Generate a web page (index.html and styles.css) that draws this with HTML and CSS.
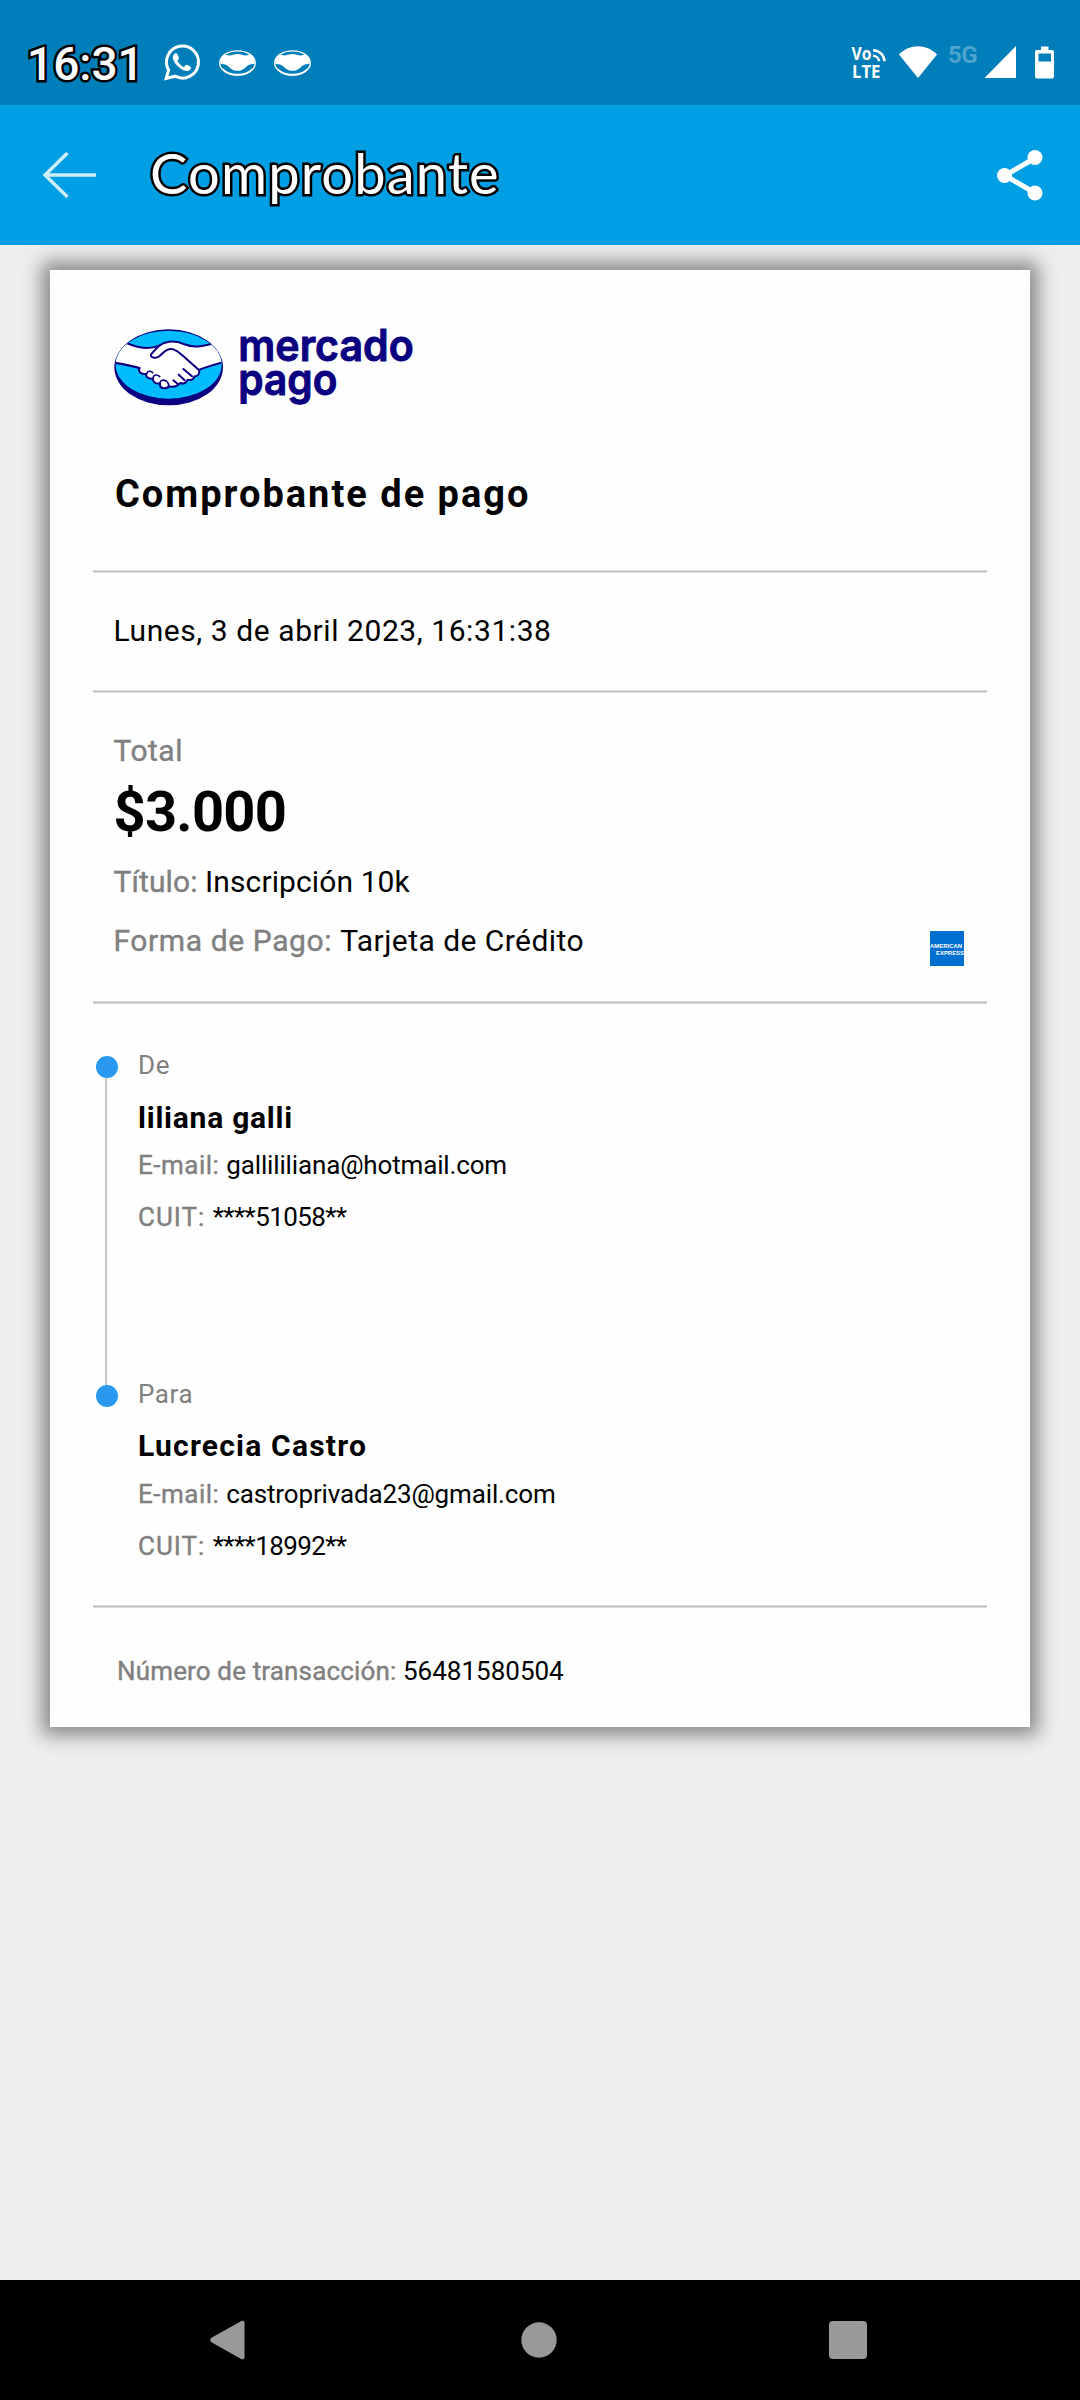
FILE: index.html
```html
<!DOCTYPE html>
<html lang="es">
<head>
<meta charset="utf-8">
<title>Comprobante</title>
<link rel="stylesheet" href="styles.css">
</head>
<body>
<div class="status">
  <span class="clock">16:31</span>
  <svg class="ic-wa" width="36" height="37" viewBox="0 0 36 37"><path d="M2.2 34.4 4.6 26A16 16 0 1 1 11 32.2Z" fill="none" stroke="#fff" stroke-width="3"/><path d="M12.8 9.6c-.6-.5-2.200-.3-2.900.6-2.200 3-.8 6.900 3.200 11.300 4.200 4.500 8.600 6.600 12 4.900 1.500-.8 2.300-2.300 1.900-3.200-.3-.8-3.900-2.700-4.800-2.500-1 .2-1.600 2.200-2.500 2.200-1.200 0-5.900-4.300-6.100-5.900-.1-.9 1.400-1.700 1.400-2.700 0-.9-1.500-4.200-2.200-4.700Z" fill="#fff"/></svg>
  <svg class="ic-mp" width="37" height="26" viewBox="0 0 37 26"><ellipse cx="18.500" cy="13" rx="17.800" ry="12.200" fill="none" stroke="#fff" stroke-width="1.300"/><path d="M1.500 14C.8 10 2 7.500 5 4.600c3 .8 6 1.300 9 .2 3-1.200 6-1.200 9 0s6 .6 9-.2c3 2.900 4.200 5.400 3.500 9.400-3.500-.4-6 .4-8 2.500-2 2.200-4.500 4-7 4.300h-4c-2.500-.3-5-2.100-7-4.300-2-2.100-4.500-2.900-8-2.500Z" fill="#fff"/><path d="M3.500 19c7 7.600 23 7.600 30 0" fill="none" stroke="#fff" stroke-width="1.800"/></svg>
  <svg class="ic-mp" width="37" height="26" viewBox="0 0 37 26"><ellipse cx="18.500" cy="13" rx="17.800" ry="12.200" fill="none" stroke="#fff" stroke-width="1.300"/><path d="M1.500 14C.8 10 2 7.500 5 4.600c3 .8 6 1.300 9 .2 3-1.200 6-1.200 9 0s6 .6 9-.2c3 2.900 4.200 5.400 3.500 9.400-3.500-.4-6 .4-8 2.500-2 2.200-4.500 4-7 4.300h-4c-2.500-.3-5-2.100-7-4.300-2-2.100-4.500-2.900-8-2.500Z" fill="#fff"/><path d="M3.500 19c7 7.600 23 7.600 30 0" fill="none" stroke="#fff" stroke-width="1.800"/></svg>
  <svg class="radios" width="206" height="36" viewBox="850 45 206 36">
    <text class="volte" x="851.500" y="60" textLength="20" lengthAdjust="spacingAndGlyphs">Vo</text>
    <text class="volte" x="852" y="77.500" textLength="28.500" lengthAdjust="spacingAndGlyphs">LTE</text>
    <g fill="none" stroke="#fff" stroke-width="2.400"><path d="M873 50.200a11.500 11.500 0 0 1 11.500 11M873 55.700a6 6 0 0 1 6 5.500"/></g>
    <path d="M918 78 899 54.500c10.500-11 27.500-11 38 0Z" fill="#fff"/>
    <text class="fiveg" x="948" y="63" textLength="29.500">5G</text>
    <path d="M1016 46v32h-31.500Z" fill="#fff"/>
    <path d="M1041 46.500h7.500V50h3.500a2 2 0 0 1 2 2v24.500a2 2 0 0 1-2 2h-15a2 2 0 0 1-2-2V52a2 2 0 0 1 2-2h4Zm-2.500 7V61.500h12.500V53.500Z" fill="#fff" fill-rule="evenodd"/>
  </svg>
</div>
<header class="appbar">
  <svg class="back" width="54" height="48" viewBox="0 0 54 48"><path d="M53 24H3M24.500 2 2 24l22.500 22" fill="none" stroke="#cfeefb" stroke-width="3.400"/></svg>
  <h1 class="title">Comprobante</h1>
  <svg class="share" width="46" height="51" viewBox="0 0 46 51"><path d="M38 8 8 25.500 38 43" fill="none" stroke="#fff" stroke-width="5"/><g fill="#fff"><circle cx="38" cy="7.500" r="7.500"/><circle cx="7.500" cy="25.500" r="7.500"/><circle cx="38" cy="43" r="7.500"/></g></svg>
</header>
<main class="page">
  <article class="card">
    <svg class="logo" width="300" height="78" viewBox="280 266 900 234">
      <clipPath id="oval"><ellipse cx="444" cy="373" rx="159" ry="102"/></clipPath>
      <ellipse cx="444" cy="381" rx="163" ry="114" fill="#0a0080"/>
      <ellipse cx="444" cy="373" rx="159" ry="102" fill="#00bcff"/>
      <g clip-path="url(#oval)" stroke="#0a0080" stroke-width="6" stroke-linejoin="round" stroke-linecap="round">
        <path d="M270 292 325 311c30 12 62 18 92 4 24-15 50-13 72-4 30 12 52 8 82 0l60-22v72c-35 5-60 15-95 27 1 14-5 20-14 20-4 10-12 13-21 10-5 11-13 14-22 10-10 10-20 14-32 10-18 12-31 4-29-9-14 3-22-5-21-14-15 2-22-6-20-14-16 2-26-8-20-18-24-7-52-12-90-18Z" fill="#fff"/>
        <path d="M417 315c-8 8-16 14-26 28-4 8 14 14 26 4 10-8 18-21 34-21 14 0 22 10 34 19l49 43M488 386l26 22M474 403l18 17M458 420l14 12" fill="none"/>
        <path d="M378 400c2-8 12-10 18-3M398 412c0-9 12-11 19-3M418 427c2-9 14-11 22-2 6 7 4 12 2 16" fill="none" stroke-width="5"/>
      </g>
      <text class="brand" x="653" y="362" textLength="526" lengthAdjust="spacingAndGlyphs">mercado</text>
      <text class="brand" x="653" y="465" textLength="297" lengthAdjust="spacingAndGlyphs">pago</text>
    </svg>
    <h2 class="heading">Comprobante de pago</h2>
    <hr class="rule">
    <p class="date">Lunes, 3 de abril 2023, 16:31:38</p>
    <hr class="rule">
    <section class="summary">
      <div>
        <p class="label row-total">Total</p>
        <p class="amount">$3.000</p>
        <p class="row-title"><span class="label">Título:</span> Inscripción 10k</p>
        <p class="row-method"><span class="label">Forma de Pago: </span>Tarjeta de Crédito</p>
      </div>
      <svg class="amex" width="34" height="35" viewBox="0 0 34 35"><rect width="34" height="35" fill="#016fd0"/><text x="0" y="16.800" textLength="32" lengthAdjust="spacingAndGlyphs">AMERICAN</text><text x="6" y="24" textLength="28" lengthAdjust="spacingAndGlyphs">EXPRESS</text></svg>
    </section>
    <hr class="rule">
    <section class="parties">
      <div class="track"><i class="dot"></i><i class="line"></i><i class="dot"></i></div>
      <div class="people">
        <div class="person">
          <p class="role">De</p>
          <h3>liliana galli</h3>
          <p><span class="label">E-mail: </span>gallililiana@hotmail.com</p>
          <p class="cuit"><span class="label">CUIT: </span>****51058**</p>
        </div>
        <div class="person payee">
          <p class="role">Para</p>
          <h3>Lucrecia Castro</h3>
          <p><span class="label">E-mail: </span>castroprivada23@gmail.com</p>
          <p class="cuit"><span class="label">CUIT: </span>****18992**</p>
        </div>
      </div>
    </section>
    <hr class="rule">
    <p class="transaction"><span class="label">Número de transacción: </span>56481580504</p>
  </article>
</main>
<nav class="navbar">
  <svg width="36" height="40" viewBox="0 0 36 40"><path d="M31.500 2 2 18.500q-1.500 1.500 0 3L31.500 38q2 1 2-1V3q0-2-2-1Z" fill="#999" stroke="#999" stroke-width="2"/></svg>
  <svg class="home" width="36" height="36" viewBox="0 0 36 36"><circle cx="18" cy="18" r="17.700" fill="#999"/></svg>
  <svg width="38" height="38" viewBox="0 0 38 38"><rect width="38" height="38" rx="4" fill="#999"/></svg>
</nav>
</body>
</html>
```
FILE: styles.css
```css
* { box-sizing: border-box; }
body {
  margin: 0;
  width: 1080px;
  height: 2400px;
  display: flex;
  flex-direction: column;
  background: #eee;
  color: #000;
  font-family: Roboto, sans-serif;
}
h1, h2, h3, p { margin: 0; }
svg { overflow: visible; }

.status {
  height: 105px;
  flex: none;
  background: #007eb9;
  display: flex;
  align-items: flex-start;
  padding: 44px 24px 0 27px;
}
.clock {
  width: 137px;
  margin-top: -8px;
  font-size: 46px;
  line-height: 56px;
  font-weight: 500;
  color: #fff;
  -webkit-text-stroke: 5px #000;
  paint-order: stroke fill;
  stroke-linejoin: round;
}
.ic-mp { margin: 6px 0 0 18px; }
.ic-wa + .ic-mp { margin-left: 19px; }
.radios { margin: 1px 0 0 auto; }
.volte { font: 700 17px "Open Sans", sans-serif; fill: #fff; }
.fiveg { font: 700 24px Roboto, sans-serif; fill: #4da5ce; }

.appbar {
  height: 140px;
  flex: none;
  background: #009ee3;
  display: flex;
  align-items: center;
  padding: 0 37px 0 43px;
  position: relative;
  z-index: 1;
}
.title {
  margin: 0 0 5px 53px;
  font: 400 56px/70px Lato, sans-serif;
  letter-spacing: 1.2px;
  color: #fff;
  -webkit-text-stroke: 5px #000;
  paint-order: stroke fill;
  stroke-linejoin: round;
}
.share { margin-left: auto; }

.page { flex: 1; padding: 25px 50px 0; }
.card {
  height: 1457px;
  padding: 59px 43px 0;
  background: #fefefe;
  box-shadow: 0 0 18px 8px rgba(0, 0, 0, .43);
}
.logo { display: block; margin-left: 20.500px; }
.brand {
  font: 600 130px Inter, sans-serif;
  fill: #0a0080;
  stroke: #0a0080;
  stroke-width: 3;
  stroke-linejoin: round;
}
.heading {
  margin: 62px 0 0 22px;
  font-size: 38px;
  line-height: 50px;
  letter-spacing: 2px;
  height: 101px;
}
.rule {
  width: 894px;
  height: 3px;
  margin: 0;
  border: solid #dcdcdc;
  border-width: 1px 0;
  background: #bdbdbd;
}
.label { color: #808080; -webkit-text-stroke: .4px #808080; }
.role { color: #808080; letter-spacing: .6px; }
.date {
  height: 117px;
  padding: 38px 0 0 20.500px;
  font-size: 30px;
  line-height: 40px;
  letter-spacing: .57px;
}
.summary {
  height: 308px;
  display: flex;
  justify-content: space-between;
  padding: 38px 23px 0 20.500px;
  font-size: 30px;
  line-height: 40px;
  letter-spacing: .5px;
}
.amount {
  font-size: 56px;
  line-height: 60px;
  font-weight: 700;
  letter-spacing: -.7px;
  margin: 11px 0 20px;
}
.row-title { letter-spacing: .1px; }
.row-method { margin-top: 19px; letter-spacing: .45px; }
.row-method .label { letter-spacing: .6px; }
.amex { margin-top: 200px; }
.amex text { font: 700 6px "Liberation Sans", sans-serif; letter-spacing: 0; fill: #fff; }

.parties {
  height: 601px;
  display: flex;
  padding: 52px 0 0 2.500px;
  font-size: 26px;
  line-height: 34px;
  letter-spacing: -.15px;
}
.parties .label { letter-spacing: .5px; }
.track {
  width: 22px;
  height: 351px;
  display: flex;
  flex-direction: column;
  align-items: center;
}
.dot { width: 22px; height: 22px; border-radius: 50%; background: #2998ee; }
.line { width: 2px; margin-right: 2px; flex: 1; background: #c4c4c4; }
.people { padding: 0 0 0 20.500px; margin-top: -8px; }
.person { height: 329px; }
.person h3 {
  margin: 16px 0 10px;
  font-size: 30px;
  line-height: 40px;
  letter-spacing: .75px;
}
.payee h3 { margin: 15px 0 11px; letter-spacing: 1.2px; }
.cuit { margin-top: 18px; letter-spacing: -.6px; }
.cuit .label { letter-spacing: 1px; }
.transaction {
  padding: 46px 0 0 24px;
  font-size: 26px;
  line-height: 34px;
}
.transaction .label { letter-spacing: .15px; }

.navbar {
  height: 120px;
  flex: none;
  background: #000;
  display: flex;
  align-items: center;
  justify-content: space-between;
  padding: 0 213px 0 210px;
}
.home { margin-left: 3px; }
```
